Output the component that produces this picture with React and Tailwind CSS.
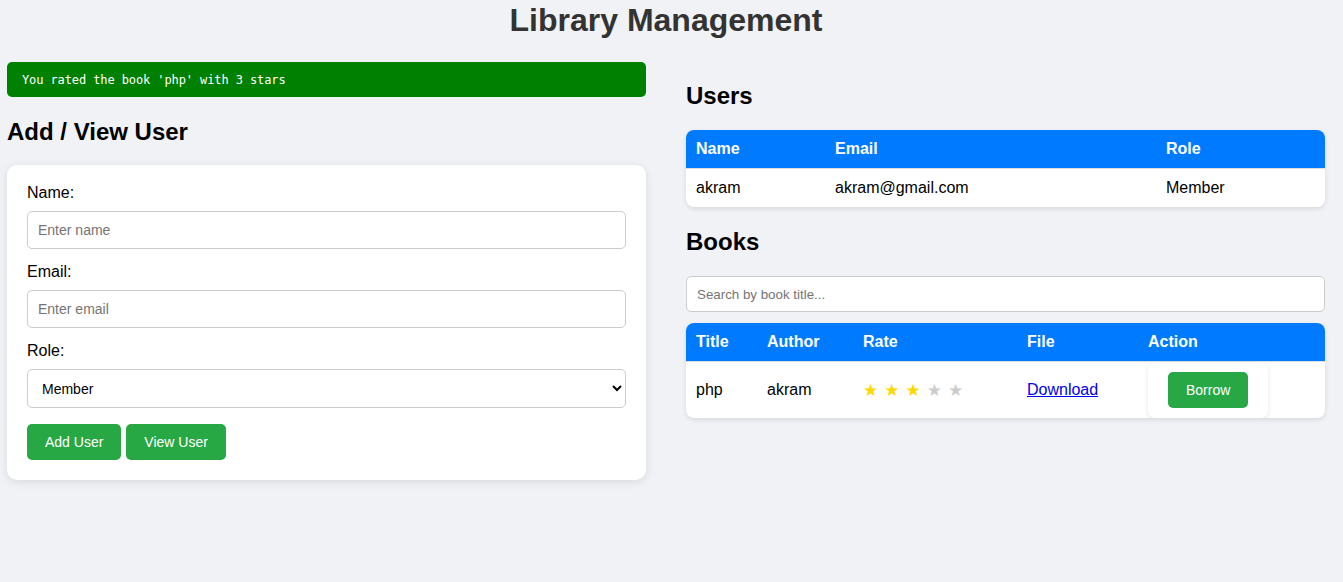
import React, { useState } from 'react';

const users = [{ name: 'akram', email: 'akram@gmail.com', role: 'Member' }];
const books = [{ title: 'php', author: 'akram', rate: 3 }];

const Stars = ({ value }) => (
  <span className="font-['DejaVu_Sans',sans-serif] text-[17px] leading-[18px]">
    {[1, 2, 3, 4, 5].map((n) => (
      <span key={n} className={`mr-[6px] ${n <= value ? 'text-[#ffd700]' : 'text-[#ccc]'}`}>
        ★
      </span>
    ))}
  </span>
);

const App = () => {
  const [name, setName] = useState('');
  const [email, setEmail] = useState('');
  const [role, setRole] = useState('Member');
  const [search, setSearch] = useState('');

  const inputClass =
    'block w-full h-[38px] border border-[#ccc] rounded-[5px] bg-white px-[10px] text-[14px] text-black placeholder:text-[#757575] outline-none';
  const btnClass =
    'h-[36px] px-[18px] rounded-[5px] bg-[#28a745] text-white text-[14px] cursor-pointer';

  const filtered = books.filter((b) => b.title.toLowerCase().includes(search.toLowerCase()));

  return (
    <div className="min-h-screen bg-[#f0f2f5] pt-[2px] pl-[7px] pr-[18px] font-['Liberation_Sans',Arial,sans-serif] text-black">
      <h1 className="text-center text-[32px] leading-[37px] font-bold text-[#333] mb-[23px]">
        Library Management
      </h1>

      <div className="flex gap-[40px] items-start">
        {/* left column */}
        <div className="flex-1">
          <div className="h-[35px] flex items-center px-[15px] rounded-[5px] bg-[#008000] text-white font-['DejaVu_Sans_Mono',monospace] text-[12px] tracking-[-0.1px]">
            You rated the book 'php' with 3 stars
          </div>

          <h2 className="text-[24px] leading-[28px] font-bold mt-[21px] mb-[19px]">Add / View User</h2>

          <div className="bg-white rounded-[10px] shadow-[0_2px_10px_rgba(0,0,0,0.1)] px-[20px] pt-[19px] pb-[20px]">
            <label className="block text-[16px] leading-[18px] mb-[9px]">Name:</label>
            <input
              className={inputClass}
              placeholder="Enter name"
              value={name}
              onChange={(e) => setName(e.target.value)}
            />

            <label className="block text-[16px] leading-[18px] mt-[14px] mb-[9px]">Email:</label>
            <input
              className={inputClass}
              placeholder="Enter email"
              value={email}
              onChange={(e) => setEmail(e.target.value)}
            />

            <label className="block text-[16px] leading-[18px] mt-[14px] mb-[9px]">Role:</label>
            <select
              className="block w-full h-[39px] border border-[#ccc] rounded-[5px] bg-white px-[10px] text-[14px] text-black outline-none"
              value={role}
              onChange={(e) => setRole(e.target.value)}
            >
              <option>Member</option>
              <option>Admin</option>
            </select>

            <div className="flex gap-[5px] mt-[16px]">
              <button type="button" className={btnClass}>
                Add User
              </button>
              <button type="button" className={btnClass}>
                View User
              </button>
            </div>
          </div>
        </div>

        {/* right column */}
        <div className="flex-1">
          <h2 className="text-[24px] leading-[28px] font-bold mt-[20px] mb-[20px]">Users</h2>
          <div className="bg-white rounded-[8px] overflow-hidden shadow-[0_2px_5px_rgba(0,0,0,0.1)]">
            <table className="w-full table-fixed border-collapse text-[16px] leading-[18px]">
              <thead>
                <tr className="bg-[#007bff] text-white text-left">
                  <th className="w-[139px] px-[10px] py-[10px] font-bold">Name</th>
                  <th className="w-[331px] px-[10px] py-[10px] font-bold">Email</th>
                  <th className="px-[10px] py-[10px] font-bold">Role</th>
                </tr>
              </thead>
              <tbody>
                {users.map((u) => (
                  <tr key={u.email}>
                    <td className="px-[10px] py-[10px] border-t border-[#ddd]">{u.name}</td>
                    <td className="px-[10px] py-[10px] border-t border-[#ddd]">{u.email}</td>
                    <td className="px-[10px] py-[10px] border-t border-[#ddd]">{u.role}</td>
                  </tr>
                ))}
              </tbody>
            </table>
          </div>

          <h2 className="text-[24px] leading-[28px] font-bold mt-[21px] mb-[20px]">Books</h2>
          <input
            className="block w-full h-[36px] border border-[#ccc] rounded-[5px] bg-white px-[10px] text-[13.33px] placeholder:text-[#757575] outline-none mb-[11px]"
            placeholder="Search by book title..."
            value={search}
            onChange={(e) => setSearch(e.target.value)}
          />
          <div className="bg-white rounded-[8px] overflow-hidden shadow-[0_2px_5px_rgba(0,0,0,0.1)]">
            <table className="w-full table-fixed border-collapse text-[16px] leading-[18px]">
              <thead>
                <tr className="bg-[#007bff] text-white text-left">
                  <th className="w-[71px] px-[10px] py-[10px] font-bold">Title</th>
                  <th className="w-[96px] px-[10px] py-[10px] font-bold">Author</th>
                  <th className="w-[164px] px-[10px] py-[10px] font-bold">Rate</th>
                  <th className="w-[121px] px-[10px] py-[10px] font-bold">File</th>
                  <th className="px-[10px] py-[10px] font-bold">Action</th>
                </tr>
              </thead>
              <tbody>
                {filtered.map((b) => (
                  <tr key={b.title}>
                    <td className="px-[10px] border-t border-[#ddd] align-middle">{b.title}</td>
                    <td className="px-[10px] border-t border-[#ddd] align-middle">{b.author}</td>
                    <td className="px-[10px] border-t border-[#ddd] align-middle">
                      <Stars value={b.rate} />
                    </td>
                    <td className="px-[10px] border-t border-[#ddd] align-middle">
                      <a href="#" className="text-[#0000ee] underline">
                        Download
                      </a>
                    </td>
                    <td className="px-[10px] border-t border-[#ddd] align-middle">
                      <div className="inline-block bg-white rounded-[8px] shadow-[0_2px_5px_rgba(0,0,0,0.1)] px-[20px] py-[10px]">
                        <button type="button" className={`${btnClass} w-[80px] px-0 block`}>
                          Borrow
                        </button>
                      </div>
                    </td>
                  </tr>
                ))}
              </tbody>
            </table>
          </div>
        </div>
      </div>
    </div>
  );
};

export default App;
